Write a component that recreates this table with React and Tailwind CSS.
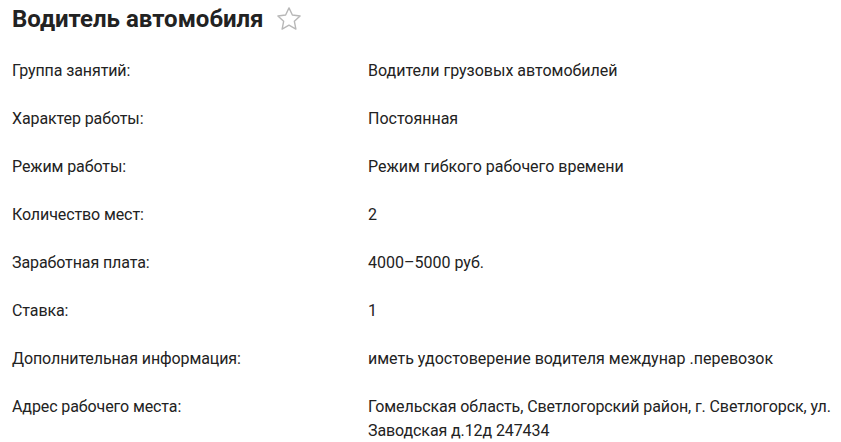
const rows = [
  ['Группа занятий:', 'Водители грузовых автомобилей'],
  ['Характер работы:', 'Постоянная'],
  ['Режим работы:', 'Режим гибкого рабочего времени'],
  ['Количество мест:', '2'],
  ['Заработная плата:', '4000–5000 руб.'],
  ['Ставка:', '1'],
  ['Дополнительная информация:', 'иметь удостоверение водителя междунар .перевозок'],
  ['Адрес рабочего места:', 'Гомельская область, Светлогорский район, г. Светлогорск, ул. Заводская д.12д 247434'],
];

export default function App() {
  return (
    <div className="w-[841px] h-[442px] overflow-hidden bg-white pl-[12px] text-[#222222] font-['Roboto',sans-serif]">
      <div className="flex items-center h-[36px] pt-[1px]">
        <h1 className="text-[24px] font-bold leading-none">Водитель автомобиля</h1>
        <svg className="ml-[11px]" width="28" height="28" viewBox="0 0 24 24" fill="none" stroke="#b8b8b8" strokeWidth="1.2" strokeLinejoin="round">
          <path d="M12 2.5l2.9 6.1 6.6.8-4.9 4.6 1.3 6.6L12 17.3l-5.9 3.3 1.3-6.6-4.9-4.6 6.6-.8z" />
        </svg>
      </div>
      <div className="flex flex-col gap-[24px] pt-[23px]">
        {rows.map(([label, value], i) => (
          <div key={label} className="flex text-[16px] leading-[24px]">
            <div className="w-[356px] shrink-0 tracking-[-0.1px]">{label}</div>
            <div className={i === rows.length - 1 ? 'flex-1 pr-[4px] tracking-[-0.1px]' : 'flex-1'}>{value}</div>
          </div>
        ))}
      </div>
    </div>
  );
}
